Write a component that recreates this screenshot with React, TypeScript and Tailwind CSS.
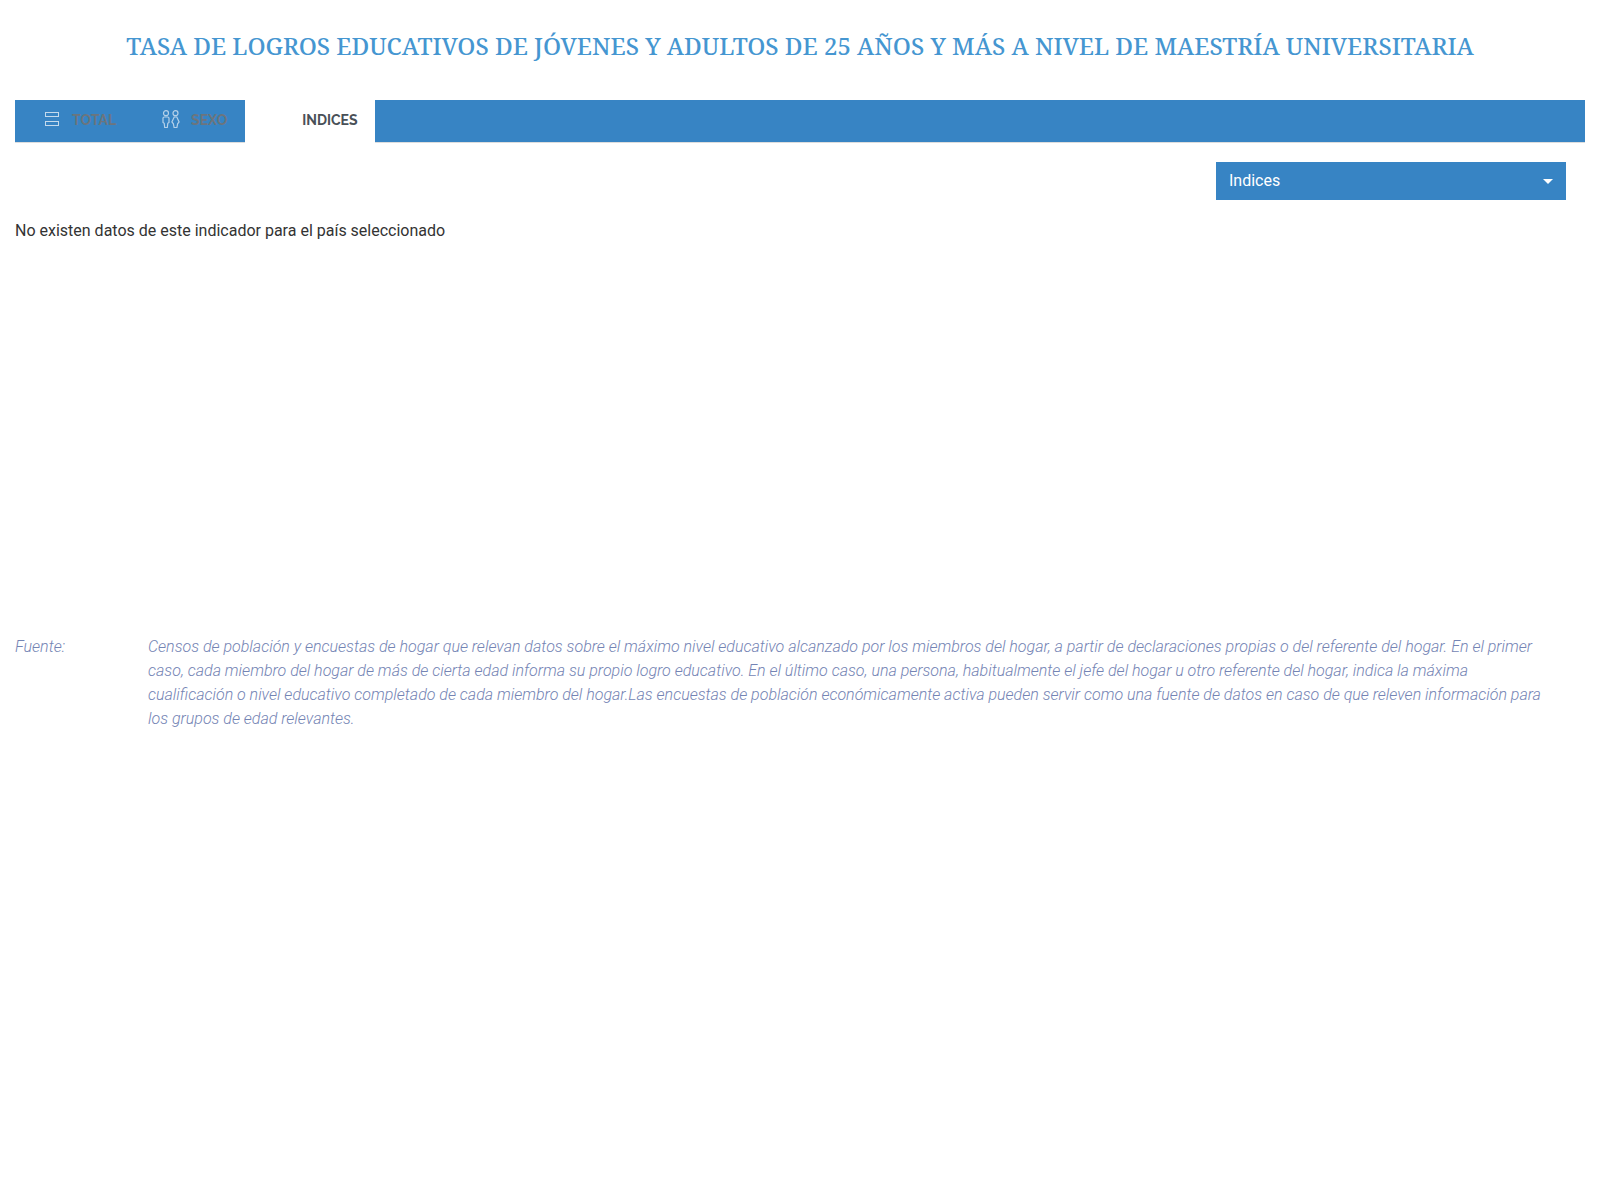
import { useState, type ReactNode } from 'react';

function BarsIcon() {
  return (
    <svg aria-hidden="true" width="20" height="20" viewBox="0 0 20 20" fill="none" stroke="#c3daed" strokeWidth="1">
      <rect x="3.5" y="2.5" width="13" height="4" />
      <rect x="3.5" y="11.5" width="13" height="4" />
    </svg>
  );
}

function PeopleIcon() {
  return (
    <svg aria-hidden="true" width="20" height="20" viewBox="0 1 20 20" fill="none" stroke="#b5d1e9" strokeWidth="1.2">
      <circle cx="5" cy="4.2" r="2.5" />
      <path d="M3.3 8h3.4c.8 0 1.3.5 1.3 1.3v4.2l-1.2.8-.5 4.2H3.7l-.5-4.2-1.2-.8V9.3C2 8.5 2.5 8 3.3 8z" />
      <circle cx="14.5" cy="4.2" r="2.5" />
      <path d="M13.2 8h2.6l2.3 5-1.5 1.800-.7 3.700h-2.800l-.7-3.700L10.900 13z" />
    </svg>
  );
}

type Tab = { id: string; label: string; icon: ReactNode };

const tabs: Tab[] = [
  { id: 'total', label: 'TOTAL', icon: <BarsIcon /> },
  { id: 'sexo', label: 'SEXO', icon: <PeopleIcon /> },
  { id: 'indices', label: 'INDICES', icon: null },
];

export default function App() {
  const [active, setActive] = useState('indices');

  return (
    <main className="bg-white px-[15px] pt-7 font-['Roboto',sans-serif] text-base text-[#333333]">
      <h1 className="text-center font-['Roboto_Slab','Noto_Serif','Liberation_Serif',serif] text-2xl leading-9 font-medium text-[#4596d1]">
        TASA DE LOGROS EDUCATIVOS DE JÓVENES Y ADULTOS DE 25 AÑOS Y MÁS A NIVEL DE MAESTRÍA UNIVERSITARIA
      </h1>

      <div
        role="tablist"
        className="mt-9 flex h-[43px] border-b border-[#dddddd] bg-[#3784c4] font-['Raleway','Lato',sans-serif] text-sm font-bold"
      >
        {tabs.map((tab) => (
          <button
            key={tab.id}
            type="button"
            role="tab"
            aria-selected={tab.id === active}
            onClick={() => setActive(tab.id)}
            className={
              tab.id === active
                ? 'flex h-[43px] items-center bg-white pr-[17px] pb-[3px] pl-[27px] text-[#495057]'
                : 'flex h-[42px] items-center pr-[18px] pb-0.5 pl-[27px] text-[#6c757d]'
            }
          >
            <span className="mr-2.5 size-5">{tab.icon}</span>
            {tab.label}
          </button>
        ))}
      </div>

      <div className="mt-[19px] flex justify-end pr-[19px]">
        <div className="relative w-[350px]">
          <select
            aria-label="Indices"
            className="block h-[38px] w-full appearance-none bg-[#3784c4] px-[13px] leading-6 text-white"
          >
            <option>Indices</option>
          </select>
          <svg
            aria-hidden="true"
            className="pointer-events-none absolute top-[17px] right-[13px]"
            width="10"
            height="5"
            viewBox="0 0 10 5"
            fill="white"
          >
            <path d="M0 0h10L5 5z" />
          </svg>
        </div>
      </div>

      <p className="mt-[19px] min-h-[416px] leading-6">No existen datos de este indicador para el país seleccionado</p>

      <dl className="flex leading-6 font-light text-[#7484b4] italic">
        <dt className="w-[133px] shrink-0">Fuente:</dt>
        <dd className="pr-[35px]">
          Censos de población y encuestas de hogar que relevan datos sobre el máximo nivel educativo alcanzado por los
          miembros del hogar, a partir de declaraciones propias o del referente del hogar. En el primer caso, cada
          miembro del hogar de más de cierta edad informa su propio logro educativo. En el último caso, una persona,
          habitualmente el jefe del hogar u otro referente del hogar, indica la máxima cualificación o nivel educativo
          completado de cada miembro del hogar.Las encuestas de población económicamente activa pueden servir como una
          fuente de datos en caso de que releven información para los grupos de edad relevantes.
        </dd>
      </dl>
    </main>
  );
}
